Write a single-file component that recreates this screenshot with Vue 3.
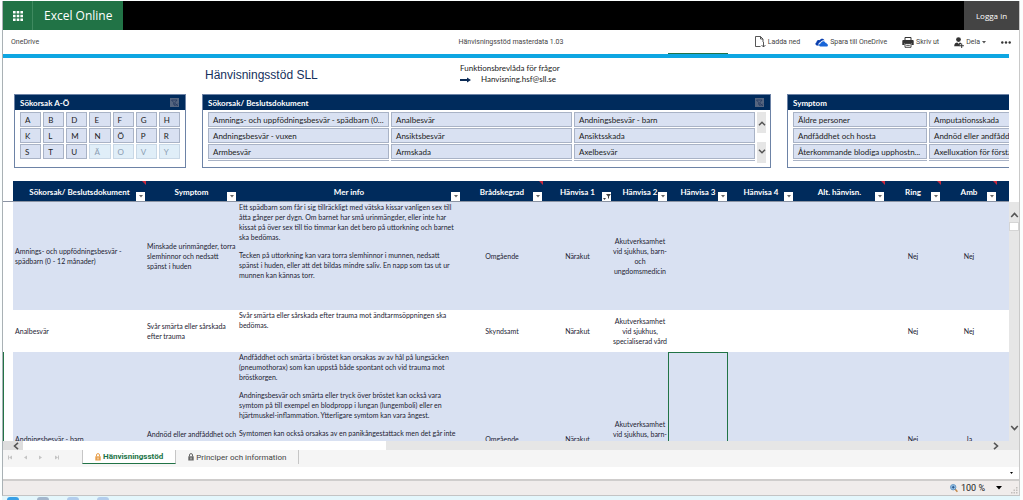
<script setup>
const letters = ['A', 'B', 'D', 'E', 'F', 'G', 'H', 'K', 'L', 'M', 'N', 'Ö', 'P', 'R', 'S', 'T', 'U', 'Ä', 'O', 'V', 'Y']
const firstDisabled = 17

const documents = [
  'Amnings- och uppfödningsbesvär - spädbarn (0...', 'Analbesvär', 'Andningsbesvär - barn',
  'Andningsbesvär - vuxen', 'Ansiktsbesvär', 'Ansiktsskada',
  'Armbesvär', 'Armskada', 'Axelbesvär',
]

const symptoms = [
  'Äldre personer', 'Amputationsskada',
  'Andfåddhet och hosta', 'Andnöd eller andfåddhet',
  'Återkommande blodiga upphostn...', 'Axelluxation för första',
]

const columns = [
  { label: 'Sökorsak/ Beslutsdokument', size: 'c-doc', note: true },
  { label: 'Symptom', size: 'c-symptom' },
  { label: 'Mer info', size: 'c-info' },
  { label: 'Brådskegrad', size: 'c-grade', note: true },
  { label: 'Hänvisa 1', size: 'c-ref1', filtered: true },
  { label: 'Hänvisa 2', size: 'c-ref2' },
  { label: 'Hänvisa 3', size: 'c-ref3' },
  { label: 'Hänvisa 4', size: 'c-ref4' },
  { label: 'Alt. hänvisn.', size: 'c-alt', note: true },
  { label: 'Ring', size: 'c-yes', note: true },
  { label: 'Amb', size: 'c-yes', note: true },
]

const rows = [
  {
    size: 'r-first',
    doc: 'Amnings- och uppfödningsbesvär - spädbarn (0 - 12 månader)',
    symptom: 'Minskade urinmängder, torra\nslemhinnor och nedsatt\nspänst i huden',
    info: [
      'Ett spädbarn som får i sig tillräckligt med vätska kissar vanligen sex till\nåtta gånger per dygn. Om barnet har små urinmängder, eller inte har\nkissat på över sex till tio timmar kan det bero på uttorkning och barnet\nska bedömas.',
      'Tecken på uttorkning kan vara torra slemhinnor i munnen, nedsatt\nspänst i huden, eller att det bildas mindre saliv. En napp som tas ut ur\nmunnen kan kännas torr.',
    ],
    grade: 'Omgående', ref1: 'Närakut',
    ref2: 'Akutverksamhet\nvid sjukhus, barn-\noch\nungdomsmedicin',
    ring: 'Nej', amb: 'Nej',
  },
  {
    size: 'r-second',
    doc: 'Analbesvär',
    symptom: 'Svår smärta eller sårskada\nefter trauma',
    info: ['Svår smärta eller sårskada efter trauma mot ändtarmsöppningen ska\nbedömas.'],
    grade: 'Skyndsamt', ref1: 'Närakut',
    ref2: 'Akutverksamhet\nvid sjukhus,\nspecialiserad vård',
    ring: 'Nej', amb: 'Nej',
  },
  {
    size: 'r-third',
    doc: 'Andningsbesvär - barn',
    symptom: 'Andnöd eller andfåddhet och\nhosta',
    info: [
      'Andfåddhet och smärta i bröstet kan orsakas av av hål på lungsäcken\n(pneumothorax) som kan uppstå både spontant och vid trauma mot\nbröstkorgen.',
      'Andningsbesvär och smärta eller tryck över bröstet kan också vara\nsymtom på till exempel en blodpropp i lungan (lungemboli) eller en\nhjärtmuskel-inflammation. Ytterligare symtom kan vara ångest.',
      'Symtomen kan också orsakas av en panikångestattack men det går inte',
    ],
    grade: 'Omgående', ref1: 'Närakut',
    ref2: 'Akutverksamhet\nvid sjukhus, barn-\noch\nungdomsmedicin',
    ring: 'Nej', amb: 'Ja',
    selected: true,
  },
]
</script>

<template>
  <div class="desktop">
    <div class="window">
      <header class="suite">
        <button class="waffle" aria-label="Appar">
          <svg width="10" height="10" viewBox="0 0 10 10" fill="#fff">
            <path d="M0 0h2.6v2.6H0zM3.7 0h2.6v2.6H3.7zM7.4 0H10v2.6H7.4zM0 3.7h2.6v2.6H0zM3.7 3.7h2.6v2.6H3.7zM7.4 3.7H10v2.6H7.4zM0 7.4h2.6V10H0zM3.7 7.4h2.6V10H3.7zM7.4 7.4H10V10H7.4z" />
          </svg>
        </button>
        <a class="brand" href="#">Excel Online</a>
        <button class="login">Logga in</button>
      </header>

      <nav class="commands">
        <a class="crumb" href="#">OneDrive</a>
        <span class="filename">Hänvisningsstöd masterdata 1.03</span>
        <div class="actions">
          <button>
            <svg width="11" height="12" viewBox="0 0 11 12" fill="none" stroke="#444">
              <path d="M5.5 10.5h-5V.5h5l2.500 2.500v3M5.500 .5v2.500H8M8.500 6v5M6.500 9l2 2 2-2" stroke-width=".9" />
            </svg>
            Ladda ned
          </button>
          <button>
            <svg width="13" height="9" viewBox="0 0 13 9">
              <path d="M1.800 7.600C.2 7.200-.2 5 1.500 4.200 1.600 2.500 3.300 1.700 4.500 2.300 5.700.1 8.700.1 9.500 2.400 7 1.800 5.800 3.300 5.500 4.300 3.700 4.400 3 6.400 3.900 7.700z" fill="#0a3fae" />
              <path d="M5.300 8.600C3.500 8.300 3.600 5.500 5.900 5.300 6.300 2.800 9.400 2.500 10.300 4.700c1-.1 1.300.3 1.400 1.100C13.400 6.200 13.200 8.500 11.600 8.600z" fill="#1765d8" />
            </svg>
            Spara till OneDrive
          </button>
          <button>
            <svg width="12" height="11" viewBox="0 0 12 11">
              <path d="M3 3V.5h6V3" fill="none" stroke="#333" />
              <path d="M1.200 3h9.600q.9 0 .9.900V8H9.500V6.200h-7V8H.3V3.900Q.3 3 1.200 3z" fill="#333" />
              <path d="M3 6.500h6v3.800H3zM4.200 8.300h3.600" fill="#fff" stroke="#333" stroke-width=".9" />
            </svg>
            Skriv ut
          </button>
          <button>
            <svg width="10" height="11" viewBox="0 0 10 11" fill="#333">
              <circle cx="4.500" cy="2.600" r="2.400" />
              <path d="M.2 9.300C.2 6.500 1.800 5.600 3.300 5.600l1.300 1.200 1.200-1.200 1.400.3v1.300H5.800v2.100z" />
              <path d="M7.200 6.600h1v1.700h1.700v1H8.200V11h-1V9.300H5.500v-1h1.700z" />
            </svg>
            Dela
            <svg class="caret" width="4" height="3" viewBox="0 0 4 3" fill="#555"><path d="M0 0h4L2 2.500z" /></svg>
          </button>
          <button aria-label="Mer">
            <svg width="10" height="3" viewBox="0 0 10 3" fill="#333"><circle cx="1.300" cy="1.500" r="1.200" /><circle cx="5" cy="1.500" r="1.200" /><circle cx="8.700" cy="1.500" r="1.200" /></svg>
          </button>
        </div>
      </nav>

      <div class="band"><span class="band-mark"></span></div>

      <section class="intro">
        <h1>Hänvisningsstöd SLL</h1>
        <div class="contact">
          <span>Funktionsbrevlåda för frågor</span>
          <a href="mailto:Hanvisning.hsf@sll.se">
            <svg width="11" height="6" viewBox="0 0 11 6" fill="#0b2a55"><path d="M0 2h7V.5L11 3 7 5.500V4H0z" /></svg>
            Hanvisning.hsf@sll.se
          </a>
        </div>
      </section>

      <section class="slicers">
        <div class="slicer az">
          <div class="slicer-head">
            <h2>Sökorsak A-Ö</h2>
            <svg width="9" height="9" viewBox="0 0 9 9"><path d="M0 0h9v9H0z" fill="#55657f" /><path d="M1.500 2h5.500L5 4.500v3L3.700 6.500v-2zM5.500 5.500l2.500 2.500M8 5.500L5.500 8" fill="none" stroke="#23395f" stroke-width=".8" /></svg>
          </div>
          <div class="items letters">
            <button v-for="(l, i) in letters" :key="l" :class="{ off: i >= firstDisabled }">{{ l }}</button>
          </div>
        </div>

        <div class="slicer docs">
          <div class="slicer-head">
            <h2>Sökorsak/ Beslutsdokument</h2>
            <svg width="9" height="9" viewBox="0 0 9 9"><path d="M0 0h9v9H0z" fill="#55657f" /><path d="M1.500 2h5.500L5 4.500v3L3.700 6.500v-2zM5.500 5.500l2.500 2.500M8 5.500L5.500 8" fill="none" stroke="#23395f" stroke-width=".8" /></svg>
          </div>
          <div class="slicer-body">
            <div class="items three">
              <button v-for="d in documents" :key="d">{{ d }}</button>
              <i v-for="n in 3" :key="n" class="next"></i>
            </div>
            <div class="mini-scroll">
              <svg width="8" height="5" viewBox="0 0 8 5" fill="none" stroke="#555" stroke-width="1.500"><path d="M1 4.300l3-3 3 3" /></svg>
              <i class="mini-thumb"></i>
              <svg width="8" height="5" viewBox="0 0 8 5" fill="none" stroke="#555" stroke-width="1.500"><path d="M1 .7l3 3 3-3" /></svg>
            </div>
          </div>
        </div>

        <div class="slicer symptoms">
          <div class="slicer-head"><h2>Symptom</h2></div>
          <div class="items two">
            <button v-for="s in symptoms" :key="s">{{ s }}</button>
            <i v-for="n in 2" :key="n" class="next"></i>
          </div>
        </div>
      </section>

      <main class="sheet">
        <div class="grid">
          <table>
            <colgroup>
              <col v-for="c in columns" :key="c.label" :class="c.size">
              <col class="c-rest">
            </colgroup>
            <thead>
              <tr>
                <th v-for="c in columns" :key="c.label" scope="col">
                  <div class="head">
                    <span>{{ c.label }}</span>
                    <button class="filter" :aria-label="'Filtrera ' + c.label">
                      <svg v-if="c.filtered" width="8" height="8" viewBox="0 0 8 8" fill="#444"><path d="M3 1h5L6 3.500V6L5 5V3.500zM0 5h3L1.500 7z" /></svg>
                      <svg v-else width="4" height="3" viewBox="0 0 4 3" fill="#666"><path d="M0 0h4L2 2.500z" /></svg>
                    </button>
                    <i v-if="c.note" class="note"></i>
                  </div>
                </th>
                <td></td>
              </tr>
            </thead>
            <tbody>
              <tr v-for="r in rows" :key="r.doc" :class="r.size">
                <td>{{ r.doc }}</td>
                <td>{{ r.symptom }}</td>
                <td class="info"><p v-for="p in r.info" :key="p">{{ p }}</p></td>
                <td class="mid">{{ r.grade }}</td>
                <td class="mid">{{ r.ref1 }}</td>
                <td class="mid">{{ r.ref2 }}</td>
                <td :class="{ selected: r.selected }"></td>
                <td></td>
                <td></td>
                <td class="mid">{{ r.ring }}</td>
                <td class="mid">{{ r.amb }}</td>
                <td></td>
              </tr>
            </tbody>
          </table>
        </div>
        <div class="vscroll">
          <svg width="9" height="6" viewBox="0 0 9 6" fill="none" stroke="#555" stroke-width="1.600"><path d="M1.200 5l3.300-3.500L7.800 5" /></svg>
          <i class="vthumb"></i>
          <svg class="down" width="9" height="6" viewBox="0 0 9 6" fill="none" stroke="#555" stroke-width="1.600"><path d="M1.200 1l3.300 3.500L7.800 1" /></svg>
        </div>
        <i class="freeze"></i>
        <i class="row-mark"></i>
      </main>

      <div class="hscroll">
        <span class="hleft"><svg width="6" height="8" viewBox="0 0 6 8" fill="none" stroke="#555" stroke-width="1.600"><path d="M5 .8L1.500 4 5 7.200" /></svg></span>
        <i class="hthumb"></i>
        <svg class="hright" width="6" height="8" viewBox="0 0 6 8" fill="none" stroke="#555" stroke-width="1.600"><path d="M1 .8L4.500 4 1 7.200" /></svg>
      </div>

      <div class="tabs">
        <svg class="steps" width="52" height="5" viewBox="0 0 52 5" fill="#c4c4c4"><path d="M0 .5h1v4H0zM4 .5v4l-3-2zM19 .5v4l-3-2zM31 .5v4l3-2zM47 .5v4l3-2zM50 .5h1v4h-1z" /></svg>
        <button class="tab active">
          <svg width="6" height="8" viewBox="0 0 6 8"><path d="M1.500 3.500V2Q1.500.6 3 .6T4.500 2v1.500" fill="none" stroke="#e8a04c" /><path d="M.3 3.300h5.400v4.200H.3z" fill="#e8a04c" /><path d="M3 4.500v2" stroke="#fff" stroke-width=".8" /></svg>
          Hänvisningsstöd
        </button>
        <button class="tab">
          <svg width="6" height="8" viewBox="0 0 6 8"><path d="M1.500 3.500V2Q1.500.6 3 .6T4.500 2v1.500" fill="none" stroke="#666" /><path d="M.3 3.300h5.400v4.200H.3z" fill="#666" /><path d="M3 4.500v2" stroke="#fff" stroke-width=".8" /></svg>
          Principer och information
        </button>
      </div>

      <div class="gap-row"><svg width="3" height="2" viewBox="0 0 3 2"><path d="M0 0h3L1.500 2z" /></svg></div>

      <footer class="status">
        <button class="zoom">
          <svg width="8" height="9" viewBox="0 0 8 9"><path d="M5 5l2.400 2.800" stroke="#c58a4a" stroke-width="1.500" /><circle cx="3.200" cy="3.200" r="2.700" fill="#a9d2f2" stroke="#5b8fc0" stroke-width=".9" /><path d="M1.700 3.200h3M3.200 1.700v3" stroke="#1b4a86" stroke-width="1" /></svg>
          100 %
          <svg class="zoom-caret" width="6" height="4" viewBox="0 0 6 4"><path d="M0 0h6L3 3.500z" /></svg>
        </button>
        <svg class="grip" width="7" height="7" viewBox="0 0 7 7" fill="#c2bebc"><path d="M5 0h1.500v1.500H5zM5 2.500h1.500V4H5zM5 5h1.500v1.500H5zM2.500 2.500H4V4H2.500zM2.500 5H4v1.500H2.500zM0 5h1.500v1.500H0z" /></svg>
      </footer>
    </div>
    <div class="taskbar"><i class="b1"></i><i class="b2"></i><i class="b3"></i><i class="b3"></i></div>
  </div>
</template>

<style>
body { margin: 0; background: #fbfefe; }
</style>

<style scoped>
* { box-sizing: border-box; }
button { border: 0; padding: 0; margin: 0; background: none; font: inherit; color: inherit; }
a { color: inherit; text-decoration: none; }
h1, h2, p { margin: 0; font-weight: 400; }
svg { display: block; flex: none; }

.desktop {
  display: flex; flex-direction: column; height: 100vh; overflow: hidden;
  padding: 1px 3px 0 2px;
  font-family: "Open Sans", "Noto Sans", sans-serif; font-size: 7px; color: #444;
}
.window {
  flex: 1; min-height: 0; display: flex; flex-direction: column;
  border-left: 1px solid #a9b1b5; border-right: 1px solid #c9c9c9; border-bottom: 1px solid #c4c4c4;
  background: #fff;
}

.suite { display: flex; height: 29px; background: #000; flex: none; }
.waffle { width: 30px; display: flex; align-items: center; justify-content: center; background: #217346; border-right: 1px solid #3f8a60; }
.brand { width: 90px; padding-left: 11px; background: #217346; color: #fff; font-size: 12px; line-height: 29px; white-space: nowrap; }
.login { margin-left: auto; width: 55px; background: #444; color: #fff; font-size: 8px; }

.commands { display: flex; align-items: center; height: 24px; padding: 0 8px; flex: none; font-family: Roboto, "Open Sans", sans-serif; }
.crumb { flex: 1; }
.filename { flex: none; }
.actions { flex: 1; display: flex; justify-content: flex-end; align-items: center; gap: 15px; white-space: nowrap; }
.actions button { display: flex; align-items: center; gap: 2px; }

.band { position: relative; height: 4px; margin-right: 10px; background: #0ea6e2; flex: none; }
.band-mark { position: absolute; right: 281px; top: -1px; width: 60px; height: 1px; background: #217346; }

.intro { display: flex; height: 36px; padding: 5px 0 0 202px; flex: none; font-family: Lato, "Open Sans", sans-serif; }
h1 { width: 255px; padding-top: 4px; font: 12px/16px "Liberation Sans", sans-serif; color: #14305c; }
.contact { display: flex; flex-direction: column; font-size: 8px; line-height: 11px; color: #222; }
.contact a { display: flex; align-items: center; gap: 10px; }

.slicers { display: flex; gap: 16px; margin: 0 10px 0 11px; height: 74px; flex: none; font-family: Lato, "Open Sans", sans-serif; font-size: 8px; color: #222; }
.slicer { border: 1px solid #6d83a6; display: flex; flex-direction: column; }
.az { width: 172px; }
.docs { flex: 1; min-width: 0; }
.symptoms { width: 222px; overflow: hidden; border-right: 0; }
.slicer-head { display: flex; align-items: center; justify-content: space-between; height: 15px; padding: 0 6px 0 5px; background: #002b5c; color: #fff; flex: none; }
.slicer-head h2 { font-size: 8px; font-weight: 700; }
.slicer-body { display: flex; padding-right: 4px; }
.items { flex: 1; min-width: 0; display: grid; grid-auto-rows: 15px; gap: 1px 2px; padding: 2px 5px 0; }
.items button { border: 1px solid #a9b3c6; background: #d9e1f2; text-align: left; padding: 0 4px; white-space: nowrap; }
.letters { grid-template-columns: repeat(7, 1fr); }
.letters button.off { background: #e0eef8; border-color: #c9d8e6; color: #8b9db2; }
.three { grid-template-columns: repeat(3, 1fr); padding-right: 2px; }
.two { grid-template-columns: 134px 134px; }
.next { height: 1px; background: #a9b3c6; }
.mini-scroll { width: 9px; height: 51px; margin-top: 2px; background: #e6e6e6; display: flex; flex-direction: column; align-items: center; padding: 9px 0; justify-content: space-between; }
.mini-thumb { width: 9px; height: 9px; background: #fff; }

.sheet { position: relative; flex: 1; min-height: 0; display: flex; margin-top: 13px; overflow: hidden; }
.grid { flex: 1; min-width: 0; padding-left: 10px; overflow: hidden; }
table { width: 100%; table-layout: fixed; border-collapse: separate; border-spacing: 0; font-family: Lato, "Open Sans", sans-serif; font-size: 7px; line-height: 10px; color: #1d2333; }
.c-doc { width: 133px; }
.c-symptom { width: 91px; }
.c-grade { width: 82px; }
.c-ref1 { width: 69px; }
.c-ref2 { width: 56px; }
.c-ref3 { width: 60px; }
.c-ref4 { width: 66px; }
.c-alt { width: 91px; }
.c-yes { width: 56px; }
.c-rest { width: 12px; }
th, td { padding: 0; }
thead tr { height: 21px; background: #002b5c; }
.head { position: relative; display: flex; justify-content: center; align-items: center; height: 21px; color: #fff; font-size: 8px; font-weight: 700; white-space: nowrap; }
.filter { position: absolute; right: 1px; bottom: 1px; width: 9px; height: 9px; display: flex; align-items: center; justify-content: center; background: #fff; }
.note { position: absolute; right: 0; top: 0; border: 2px solid; border-color: #c8283c #c8283c transparent transparent; }
tbody td { padding: 0 1px 0 2px; white-space: pre-line; overflow: hidden; }
tbody td:nth-child(2) { white-space: pre; padding: 0 0 0 1px; }
tbody td.mid { text-align: center; padding: 0; white-space: pre; }
tbody td.info { vertical-align: top; white-space: pre; }
.info p + p { margin-top: 8px; }
tbody tr:nth-child(odd) { background: #d9e1f2; }
.r-first { height: 108px; }
.r-second { height: 42px; }
.r-third { height: 173px; }
.selected { border: 1px solid #217346; }
.vscroll { width: 10px; margin-top: 21px; background: #e6e6e6; display: flex; flex-direction: column; align-items: center; padding: 10px 0; }
.vthumb { width: 10px; height: 9px; margin-top: 4px; background: #fff; border: 1px solid #d5d5d5; }
.down { margin-top: auto; }
.freeze { position: absolute; left: 0; right: 10px; top: 20px; height: 1px; background: #8b93a3; }
.row-mark { position: absolute; left: 0; top: 171px; bottom: 0; width: 1px; background: #217346; }

.hscroll { display: flex; align-items: center; height: 9px; background: #e6e6e6; flex: none; }
.hleft { width: 20px; height: 9px; display: flex; align-items: center; justify-content: flex-end; padding-right: 4px; background: #dedede; }
.hthumb { width: 363px; height: 9px; background: #fff; }
.hright { margin-left: auto; margin-right: 20px; }

.tabs { display: flex; height: 17px; background: #f5f5f5; flex: none; font-family: Roboto, "Open Sans", sans-serif; font-size: 8px; color: #444; }
.steps { width: 52px; margin: 5px 22px 0 5px; }
.tab { display: flex; align-items: center; gap: 2px; height: 14px; padding: 0 12px; border-right: 1px solid #c6c6c6; }
.tab.active { background: #fff; border-bottom: 1px solid #217346; border-left: 1px solid #c6c6c6; color: #217346; font-weight: 700; }
.gap-row { display: flex; justify-content: flex-end; align-items: center; height: 12px; padding-right: 6px; flex: none; }
.status { display: flex; justify-content: flex-end; height: 16px; border-top: 2px solid #cfcdcc; background: #f0eceb; color: #222; flex: none; }
.zoom { display: flex; align-items: center; gap: 3px; font-family: Roboto, "Open Sans", sans-serif; font-size: 9px; margin-right: 9px; }
.zoom-caret { margin-left: 8px; }
.grip { align-self: flex-end; margin: 0 1px 1px 0; }
.taskbar { display: flex; gap: 18px; height: 4px; padding: 1px 0 0 5px; background: #e4f6fb; flex: none; }
.taskbar i { width: 12px; height: 3px; border-radius: 6px 6px 0 0; }
.b1 { background: #3aa0e6; }
.b2 { background: #a3b6cc; }
.b3 { background: #b3cdec; }
</style>
